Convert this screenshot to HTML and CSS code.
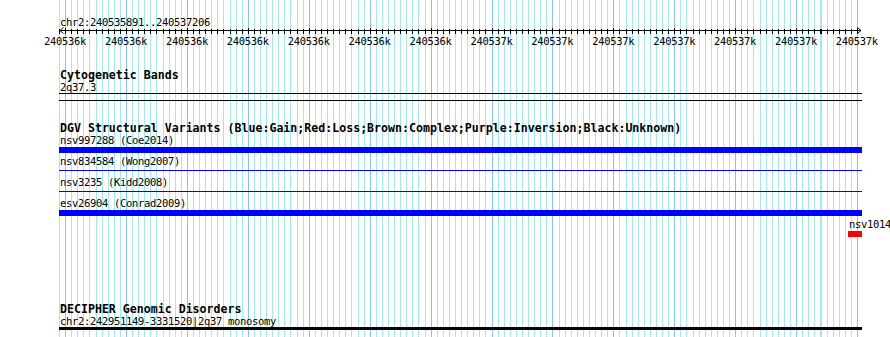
FILE: index.html
```html
<!DOCTYPE html>
<html>
<head>
<meta charset="utf-8">
<title>chr2:240535891..240537206</title>
<link rel="stylesheet" href="styles.css">
</head>
<body>
<div class="view">
  <div class="locus">chr2:240535891..240537206</div>
  <div class="ruler">
    <svg class="arrow arrow-left" width="5" height="7" viewBox="0 0 5 7"><polyline points="4.5,0.5 1,3.5 4.5,6.5" fill="none" stroke="#000" stroke-width="1"/></svg>
    <svg class="arrow arrow-right" width="5" height="7" viewBox="0 0 5 7"><polyline points="0.5,0.5 4,3.5 0.5,6.5" fill="none" stroke="#000" stroke-width="1"/></svg>
  </div>
  <div class="ticks">
    <span>240536k</span><span>240536k</span><span>240536k</span><span>240536k</span><span>240536k</span><span>240536k</span><span>240536k</span>
    <span>240537k</span><span>240537k</span><span>240537k</span><span>240537k</span><span>240537k</span><span>240537k</span><span>240537k</span>
  </div>

  <section class="track cyto">
    <h2 class="track-title">Cytogenetic Bands</h2>
    <div class="label">2q37.3</div>
    <div class="band"></div>
  </section>

  <section class="track dgv">
    <h2 class="track-title">DGV Structural Variants (Blue:Gain;Red:Loss;Brown:Complex;Purple:Inversion;Black:Unknown)</h2>
    <div class="feat">
      <div class="label">nsv997288 (Coe2014)</div>
      <div class="bar gain"></div>
    </div>
    <div class="feat">
      <div class="label">nsv834584 (Wong2007)</div>
      <div class="bar thin"></div>
    </div>
    <div class="feat">
      <div class="label">nsv3235 (Kidd2008)</div>
      <div class="bar thin"></div>
    </div>
    <div class="feat">
      <div class="label">esv26904 (Conrad2009)</div>
      <div class="bar gain"></div>
    </div>
    <div class="feat loss">
      <div class="label">nsv1014</div>
      <div class="bar red"></div>
    </div>
  </section>

  <section class="track decipher">
    <h2 class="track-title">DECIPHER Genomic Disorders</h2>
    <div class="label">chr2:242951149-3331520|2q37 monosomy</div>
    <div class="bar black"></div>
  </section>
</div>
</body>
</html>
```

FILE: styles.css
```css
html, body {
  margin: 0;
  padding: 0;
  background: #fff;
}

html {
  overflow: hidden;
}

body {
  font-family: "DejaVu Sans Mono", "Liberation Mono", monospace;
  font-size: 10.5px;
  letter-spacing: -0.32px;
  line-height: 12px;
  color: #000;
  height: 337px;
}

.view {
  box-sizing: border-box;
  margin-left: 59px;
  width: 803px;
  height: 337px;
  padding-top: 16px;
  background-image:
    repeating-linear-gradient(90deg, transparent 0 6.092px, #88c4f0 6.092px 7.092px, transparent 7.092px 60.92px),
    repeating-linear-gradient(90deg, #a4e8f0 0 1px, transparent 1px 6.092px);
  background-size: 799px 100%;
  background-repeat: no-repeat;
}

.locus {
  height: 12px;
  padding-left: 1px;
  white-space: nowrap;
}

.ruler {
  position: relative;
  width: 803px;
  height: 7px;
  background-image:
    linear-gradient(#000, #000),
    repeating-linear-gradient(90deg, transparent 0 6.092px, #000 6.092px 7.092px, transparent 7.092px 60.92px),
    repeating-linear-gradient(90deg, #000 0 1px, transparent 1px 6.092px);
  background-size: 801px 1px, 799px 6px, 799px 5px;
  background-position: 1px 2px, 0 0, 0 1px;
  background-repeat: no-repeat;
}

.arrow {
  position: absolute;
  top: -1px;
  display: block;
}

.arrow-left {
  left: 0;
}

.arrow-right {
  right: 0;
}

.ticks {
  display: flex;
  margin-left: -24.37px;
  height: 12px;
}

.ticks span {
  flex: 0 0 60.92px;
  text-align: center;
  white-space: nowrap;
}

.track-title {
  margin: 0;
  padding-left: 1px;
  font-size: 11.6px;
  letter-spacing: 0;
  font-weight: bold;
  line-height: 12px;
  white-space: nowrap;
}

.label {
  height: 12px;
  padding-left: 1px;
  white-space: nowrap;
}

.cyto {
  margin-top: 22px;
}

.band {
  height: 6px;
  border-top: 1px solid #000;
  border-bottom: 1px solid #000;
}

.dgv {
  margin-top: 21px;
}

.feat {
  margin-bottom: 2px;
}

.bar {
  margin-top: 1px;
  height: 6px;
}

.bar.gain {
  background: #0000ff;
}

.bar.thin {
  background: linear-gradient(#0000ff, #0000ff) 0 2px / 100% 1px no-repeat;
}

.feat.loss {
  margin-left: 789px;
}

.bar.red {
  width: 14px;
  background: #ff0000;
}

.decipher {
  margin-top: 66px;
}

.bar.black {
  margin-top: 0;
  height: 3px;
  background: #000;
}
```
